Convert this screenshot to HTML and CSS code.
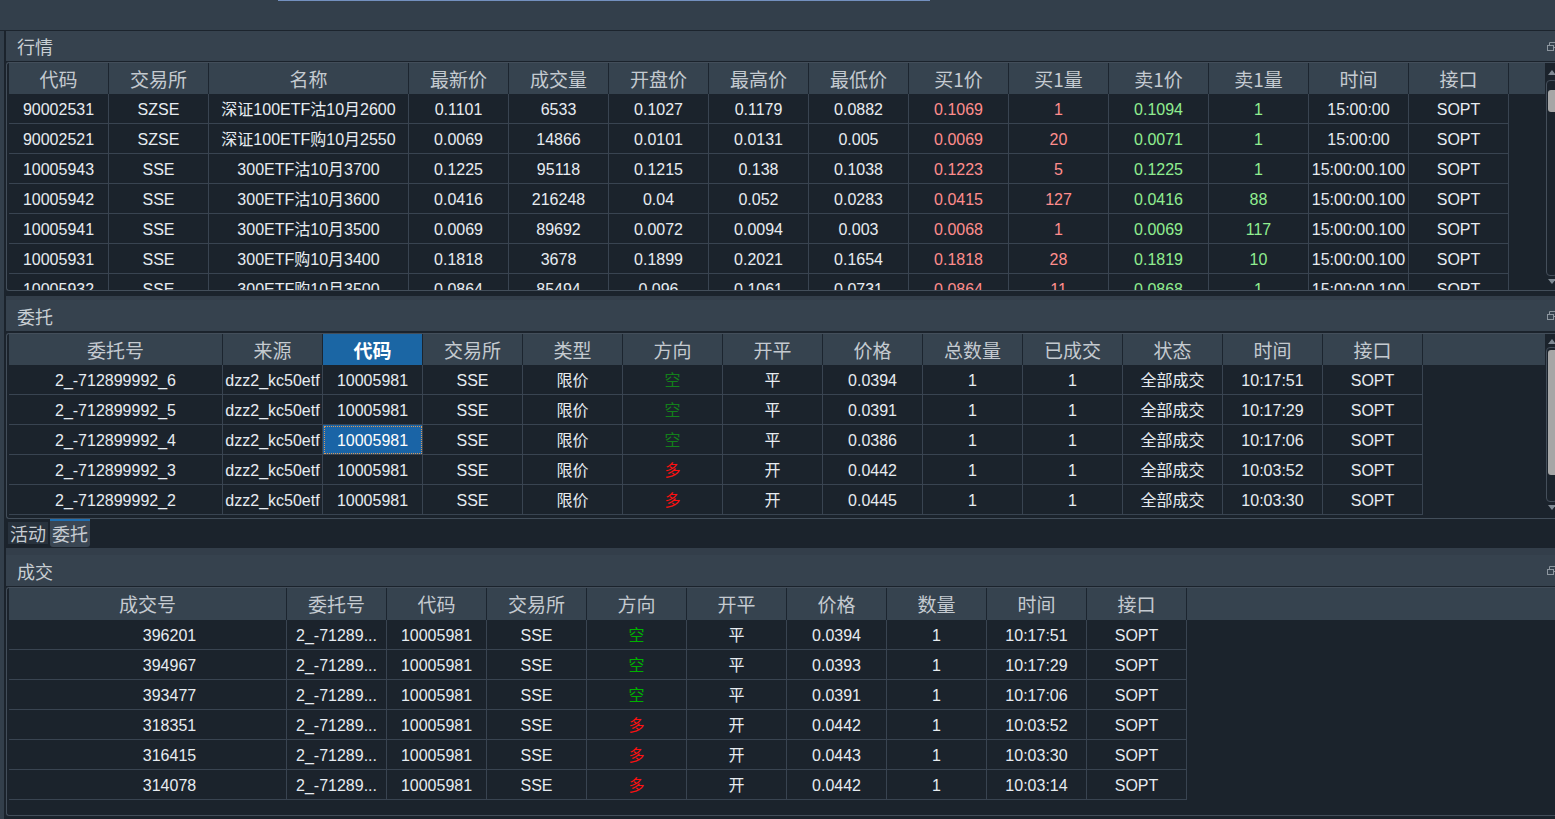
FILE: index.html
```html
<!DOCTYPE html>
<html lang="zh-CN">
<head>
<meta charset="utf-8">
<title>Trader</title>
<link rel="stylesheet" href="styles.css">
</head>
<body>
<div class="topbar"><div class="topline"></div></div>
<div class="workspace">

  <!-- 行情 -->
  <div class="dock dock1">
    <div class="dock-title t30"><span>行情</span>
      <svg class="float" viewBox="0 0 10 9"><rect x="0.5" y="3.5" width="6" height="5" fill="none" stroke="#8d969f"/><path d="M2.5 3.5V0.5h7v5h-3" fill="none" stroke="#8d969f"/></svg>
    </div>
    <div class="frame f1">
      <div class="grid">
        <div class="th">
          <span>代码</span><span>交易所</span><span class="w2">名称</span><span>最新价</span><span>成交量</span><span>开盘价</span><span>最高价</span><span>最低价</span><span>买1价</span><span>买1量</span><span>卖1价</span><span>卖1量</span><span>时间</span><span>接口</span><span class="fill"></span>
        </div>
        <div class="tb">
          <div class="r"><span>90002531</span><span>SZSE</span><span class="w2">深证100ETF沽10月2600</span><span>0.1101</span><span>6533</span><span>0.1027</span><span>0.1179</span><span>0.0882</span><span class="rd">0.1069</span><span class="rd">1</span><span class="gn">0.1094</span><span class="gn">1</span><span>15:00:00</span><span>SOPT</span></div>
          <div class="r"><span>90002521</span><span>SZSE</span><span class="w2">深证100ETF购10月2550</span><span>0.0069</span><span>14866</span><span>0.0101</span><span>0.0131</span><span>0.005</span><span class="rd">0.0069</span><span class="rd">20</span><span class="gn">0.0071</span><span class="gn">1</span><span>15:00:00</span><span>SOPT</span></div>
          <div class="r"><span>10005943</span><span>SSE</span><span class="w2">300ETF沽10月3700</span><span>0.1225</span><span>95118</span><span>0.1215</span><span>0.138</span><span>0.1038</span><span class="rd">0.1223</span><span class="rd">5</span><span class="gn">0.1225</span><span class="gn">1</span><span>15:00:00.100</span><span>SOPT</span></div>
          <div class="r"><span>10005942</span><span>SSE</span><span class="w2">300ETF沽10月3600</span><span>0.0416</span><span>216248</span><span>0.04</span><span>0.052</span><span>0.0283</span><span class="rd">0.0415</span><span class="rd">127</span><span class="gn">0.0416</span><span class="gn">88</span><span>15:00:00.100</span><span>SOPT</span></div>
          <div class="r"><span>10005941</span><span>SSE</span><span class="w2">300ETF沽10月3500</span><span>0.0069</span><span>89692</span><span>0.0072</span><span>0.0094</span><span>0.003</span><span class="rd">0.0068</span><span class="rd">1</span><span class="gn">0.0069</span><span class="gn">117</span><span>15:00:00.100</span><span>SOPT</span></div>
          <div class="r"><span>10005931</span><span>SSE</span><span class="w2">300ETF购10月3400</span><span>0.1818</span><span>3678</span><span>0.1899</span><span>0.2021</span><span>0.1654</span><span class="rd">0.1818</span><span class="rd">28</span><span class="gn">0.1819</span><span class="gn">10</span><span>15:00:00.100</span><span>SOPT</span></div>
          <div class="r"><span>10005932</span><span>SSE</span><span class="w2">300ETF购10月3500</span><span>0.0864</span><span>85494</span><span>0.096</span><span>0.1061</span><span>0.0731</span><span class="rd">0.0864</span><span class="rd">11</span><span class="gn">0.0868</span><span class="gn">1</span><span>15:00:00.100</span><span>SOPT</span></div>
        </div>
      </div>
      <div class="vs vs1">
        <svg class="arrow up" viewBox="0 0 8 5"><path d="M0 5L4 0L8 5Z" fill="#7f8993"/></svg>
        <div class="track"><div class="thumb"></div></div>
        <svg class="arrow dn" viewBox="0 0 8 5"><path d="M0 0L4 5L8 0Z" fill="#7f8993"/></svg>
      </div>
    </div>
  </div>
  <div class="split s4"></div>

  <!-- 委托 -->
  <div class="dock dock2">
    <div class="dock-title t31"><span>委托</span>
      <svg class="float" viewBox="0 0 10 9"><rect x="0.5" y="3.5" width="6" height="5" fill="none" stroke="#8d969f"/><path d="M2.5 3.5V0.5h7v5h-3" fill="none" stroke="#8d969f"/></svg>
    </div>
    <div class="frame f2">
      <div class="grid">
        <div class="th">
          <span class="wo">委托号</span><span>来源</span><span class="hl">代码</span><span>交易所</span><span>类型</span><span>方向</span><span>开平</span><span>价格</span><span>总数量</span><span>已成交</span><span>状态</span><span>时间</span><span>接口</span><span class="fill"></span>
        </div>
        <div class="tb">
          <div class="r"><span class="wo">2_-712899992_6</span><span>dzz2_kc50etf</span><span>10005981</span><span>SSE</span><span>限价</span><span class="kong">空</span><span>平</span><span>0.0394</span><span>1</span><span>1</span><span>全部成交</span><span>10:17:51</span><span>SOPT</span></div>
          <div class="r"><span class="wo">2_-712899992_5</span><span>dzz2_kc50etf</span><span>10005981</span><span>SSE</span><span>限价</span><span class="kong">空</span><span>平</span><span>0.0391</span><span>1</span><span>1</span><span>全部成交</span><span>10:17:29</span><span>SOPT</span></div>
          <div class="r"><span class="wo">2_-712899992_4</span><span>dzz2_kc50etf</span><span class="sel">10005981</span><span>SSE</span><span>限价</span><span class="kong">空</span><span>平</span><span>0.0386</span><span>1</span><span>1</span><span>全部成交</span><span>10:17:06</span><span>SOPT</span></div>
          <div class="r"><span class="wo">2_-712899992_3</span><span>dzz2_kc50etf</span><span>10005981</span><span>SSE</span><span>限价</span><span class="duo">多</span><span>开</span><span>0.0442</span><span>1</span><span>1</span><span>全部成交</span><span>10:03:52</span><span>SOPT</span></div>
          <div class="r"><span class="wo">2_-712899992_2</span><span>dzz2_kc50etf</span><span>10005981</span><span>SSE</span><span>限价</span><span class="duo">多</span><span>开</span><span>0.0445</span><span>1</span><span>1</span><span>全部成交</span><span>10:03:30</span><span>SOPT</span></div>
        </div>
      </div>
      <div class="vs vs2">
        <svg class="arrow up" viewBox="0 0 8 5"><path d="M0 5L4 0L8 5Z" fill="#7f8993"/></svg>
        <div class="track"><div class="thumb"></div></div>
        <svg class="arrow dn" viewBox="0 0 8 5"><path d="M0 0L4 5L8 0Z" fill="#7f8993"/></svg>
      </div>
    </div>
    <div class="tabbar">
      <div class="tab tab1">活动</div>
      <div class="tab tab2">委托</div>
    </div>
  </div>
  <div class="split s7"></div>

  <!-- 成交 -->
  <div class="dock dock3">
    <div class="dock-title t31"><span>成交</span>
      <svg class="float" viewBox="0 0 10 9"><rect x="0.5" y="3.5" width="6" height="5" fill="none" stroke="#8d969f"/><path d="M2.5 3.5V0.5h7v5h-3" fill="none" stroke="#8d969f"/></svg>
    </div>
    <div class="frame f3">
      <div class="grid full">
        <div class="th h32">
          <span class="wt">成交号</span><span>委托号</span><span>代码</span><span>交易所</span><span>方向</span><span>开平</span><span>价格</span><span>数量</span><span>时间</span><span>接口</span><span class="fill"></span>
        </div>
        <div class="tb">
          <div class="r"><span class="wt padl">396201</span><span>2_-71289...</span><span>10005981</span><span>SSE</span><span class="kong2">空</span><span>平</span><span>0.0394</span><span>1</span><span>10:17:51</span><span>SOPT</span></div>
          <div class="r"><span class="wt padl">394967</span><span>2_-71289...</span><span>10005981</span><span>SSE</span><span class="kong2">空</span><span>平</span><span>0.0393</span><span>1</span><span>10:17:29</span><span>SOPT</span></div>
          <div class="r"><span class="wt padl">393477</span><span>2_-71289...</span><span>10005981</span><span>SSE</span><span class="kong2">空</span><span>平</span><span>0.0391</span><span>1</span><span>10:17:06</span><span>SOPT</span></div>
          <div class="r"><span class="wt padl">318351</span><span>2_-71289...</span><span>10005981</span><span>SSE</span><span class="duo">多</span><span>开</span><span>0.0442</span><span>1</span><span>10:03:52</span><span>SOPT</span></div>
          <div class="r"><span class="wt padl">316415</span><span>2_-71289...</span><span>10005981</span><span>SSE</span><span class="duo">多</span><span>开</span><span>0.0443</span><span>1</span><span>10:03:30</span><span>SOPT</span></div>
          <div class="r"><span class="wt padl">314078</span><span>2_-71289...</span><span>10005981</span><span>SSE</span><span class="duo">多</span><span>开</span><span>0.0442</span><span>1</span><span>10:03:14</span><span>SOPT</span></div>
        </div>
      </div>
    </div>
  </div>

</div>
</body>
</html>
```

FILE: styles.css
```css
* { box-sizing: border-box; margin: 0; padding: 0; }
html, body { width: 1555px; height: 819px; overflow: hidden; }
body {
  background: #333f4b;
  font-family: "Liberation Sans", "Noto Sans CJK SC", sans-serif;
  font-size: 16px;
  color: #e7ecf1;
}

.topbar { height: 31px; border-bottom: 1px solid #1c242d; }
.topline { margin-left: 278px; width: 652px; height: 1px; background: #7390bf; }

.workspace {
  margin-left: 4px;
  padding-left: 2px;
  height: 788px;
  background: #1b232c;
  display: flex;
  flex-direction: column;
  overflow: hidden;
}

.dock { display: flex; flex-direction: column; flex: none; }
.dock1 { padding-bottom: 5px; }

.dock-title {
  display: flex;
  align-items: center;
  flex: none;
  background: #36424e;
  color: #c9cfd4;
  font-family: "Noto Sans CJK SC", sans-serif;
  font-size: 18px;
  padding-left: 11px;
}
.t30 { height: 30px; }
.t31 { height: 31px; }
.float { margin-left: auto; margin-right: -2px; width: 10px; height: 9px; flex: none; }

.split { flex: none; background: #333e4a; }
.s4 { height: 4px; }
.s7 { height: 7px; }

.frame {
  display: flex;
  flex: none;
  border: 1px solid #434e5a;
  border-right: none;
  border-radius: 3px 0 0 3px;
  padding-left: 2px;
  margin-right: -14px;
  background: #1b232c;
  overflow: hidden;
}
.f1 { margin-top: 1px; height: 229px; }
.f2 { margin-top: 2px; height: 186px; }
.f3 { margin-top: 1px; height: 229px; }

.grid { width: 1536px; flex: none; display: flex; flex-direction: column; }
.grid.full { flex: 1; width: auto; }

.th { display: flex; flex: none; height: 31px; background: #36434f; }
.th.h32 { height: 32px; }
.th span {
  flex: none;
  width: 100px;
  text-align: center;
  border-right: 1px solid #1c252f;
  font-family: "Noto Sans CJK SC", sans-serif;
  font-size: 19px;
  color: #c4cad0;
  line-height: 31px;
}
.th.h32 span { line-height: 32px; }
.th .fill { flex: 1; border-right: none; }
.th .hl { background: #1b66a4; color: #ffffff; font-weight: bold; }

.tb { flex: 1; overflow: hidden; }
.r { display: flex; height: 30px; }
.r span {
  flex: none;
  width: 100px;
  text-align: center;
  border-right: 1px solid #394451;
  border-bottom: 1px solid #394451;
  padding-top: 1px;
  line-height: 29px;
  white-space: nowrap;
  overflow: hidden;
}
.th .w2, .r .w2 { width: 200px; }
.th .wo, .r .wo { width: 214px; }
.th .wt, .r .wt { width: 278px; }
.r .padl { padding-left: 44px; }

.rd { color: #ff8d8d; }
.gn { color: #90ee90; }
.kong { color: #13801b; }
.kong2 { color: #00b000; }
.duo { color: #ff1010; }
.r .sel {
  background: #1a64a6;
  color: #ffffff;
  outline: 1px dotted #d8995a;
  outline-offset: -2px;
}

/* scrollbars */
.vs { width: 12px; margin-left: 1px; flex: none; display: flex; flex-direction: column; }
.arrow { width: 8px; height: 5px; margin-left: 2px; flex: none; display: block; }
.track { width: 12px; border: 1px solid #454f5b; border-radius: 4px; padding-left: 1px; flex: none; }
.thumb { width: 10px; background: #a6a6a6; border-radius: 3px; }

.vs1 .up { margin-top: 7px; }
.vs1 .track { margin-top: 5px; height: 196px; }
.vs1 .thumb { margin-top: 9px; height: 22px; }
.vs1 .dn { margin-top: 3px; }

.vs2 .up { margin-top: 5px; }
.vs2 .track { margin-top: 3px; height: 155px; }
.vs2 .thumb { margin-top: 2px; height: 125px; }
.vs2 .dn { margin-top: 3px; }

/* tabs */
.tabbar { height: 29px; flex: none; display: flex; align-items: flex-start; gap: 2px; padding-left: 2px; }
.tab {
  width: 40px;
  text-align: center;
  font-family: "Noto Sans CJK SC", sans-serif;
  font-size: 18px;
  color: #c6ccd2;
}
.tab1 { margin-top: 3px; height: 22px; line-height: 22px; background: #28323d; }
.tab2 { height: 28px; line-height: 25px; border-top: 2px solid #1f6eb0; background: #3a4653; border-radius: 0 0 3px 3px; }
```
